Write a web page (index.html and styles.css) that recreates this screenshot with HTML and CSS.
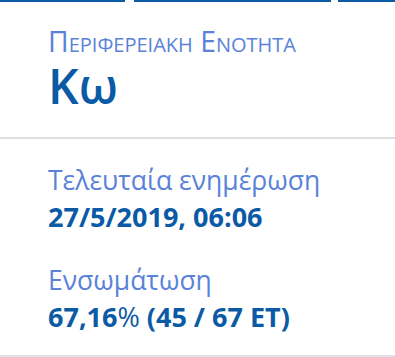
FILE: index.html
```html
<!DOCTYPE html>
<html lang="el">
<head>
  <meta charset="UTF-8">
  <meta name="viewport" content="width=device-width, initial-scale=1.0">
  <title>Κω</title>
  <link rel="stylesheet" href="styles.css">
</head>
<body>
  <div class="tabs">
    <span class="tab tab-a"></span>
    <span class="tab tab-b"></span>
    <span class="tab tab-c"></span>
  </div>

  <div class="section head">
    <div class="kicker">Περιφερειακή Ενότητα</div>
    <div class="title">Κω</div>
  </div>

  <div class="section info">
    <div class="label">Τελευταία ενημέρωση</div>
    <div class="value">27/5/2019, 06:06</div>
    <div class="label second">Ενσωμάτωση</div>
    <div class="value">67,16<span class="pct">%</span> (45 / 67 ΕΤ)</div>
  </div>
</body>
</html>
```

FILE: styles.css
```css
body {
  margin: 0;
  font-family: "Open Sans", "Noto Sans", sans-serif;
  background: #fff;
  color: #0b5aa5;
}
.tabs {
  display: flex;
}
.tab {
  height: 2px;
  background: #0b5aa5;
}
.tab-a { width: 125px; margin-right: 9px; }
.tab-b { width: 197px; margin-right: 7px; }
.tab-c { flex: 1; }

.section {
  padding-left: 48px;
  border-bottom: 2px solid #dde1e6;
}
.head {
  padding-top: 24px;
  padding-bottom: 22px;
}
.kicker {
  font-size: 28.4px;
  line-height: 31px;
  font-variant: small-caps;
  color: #5a82d8;
}
.title {
  font-size: 48px;
  line-height: 58px;
  font-weight: 600;
}
.info {
  padding-top: 22px;
  padding-bottom: 20px;
}
.label {
  font-size: 26.5px;
  line-height: 38px;
  color: #5a82d8;
}
.label.second {
  margin-top: 26px;
}
.value {
  font-size: 27px;
  line-height: 36px;
  font-weight: 700;
}
.pct {
  font-weight: 400;
}
```
